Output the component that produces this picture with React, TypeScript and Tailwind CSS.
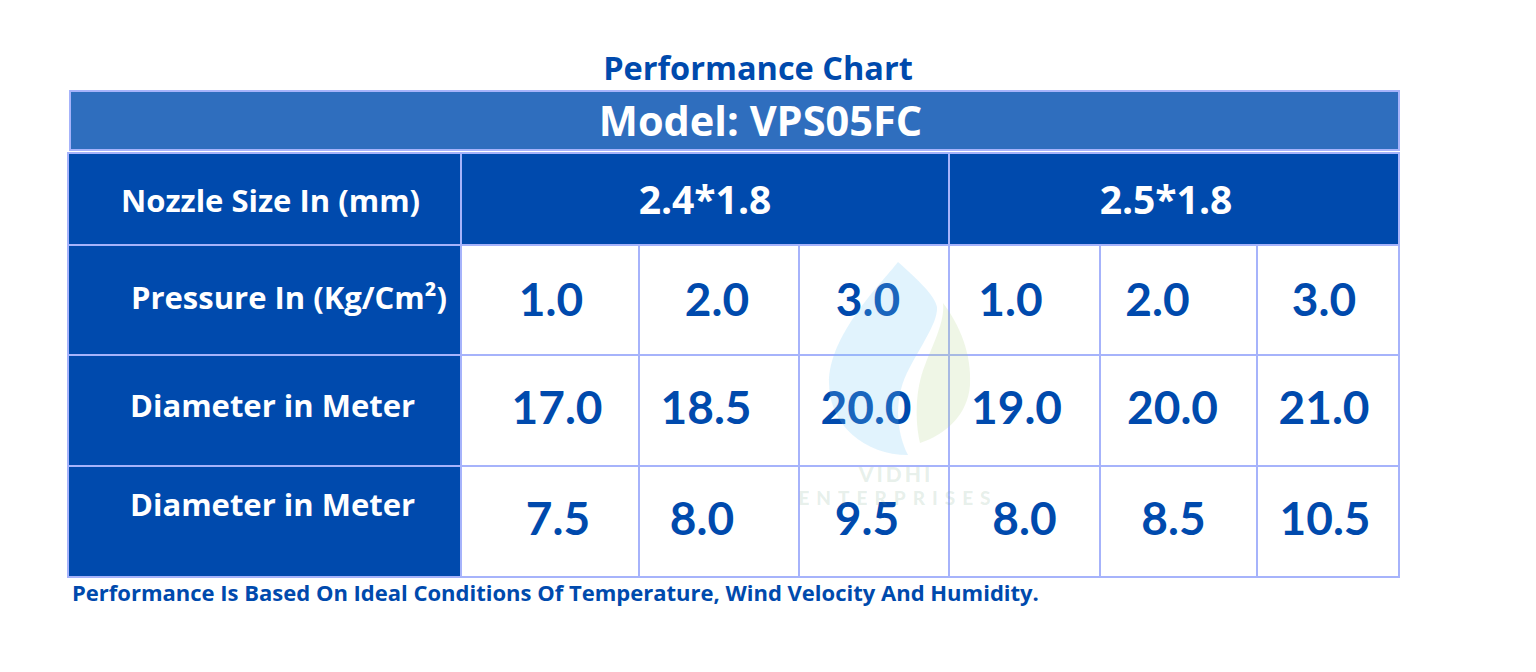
import React from "react";

const LABEL = "font-['Open_Sans',sans-serif] font-bold text-white";
const NUM = "font-['Lato',sans-serif] font-bold text-[#004aad]";

const rows = [
  {
    label: "Pressure In (Kg/Cm²)",
    labelCls: "pl-[62px] pb-[6px]",
    cells: [
      ["1.0", "pl-[2px]"],
      ["2.0", "pr-[4px]"],
      ["3.0", "pr-[12px]"],
      ["1.0", "pr-[28px]"],
      ["2.0", "pr-[42px]"],
      ["3.0", "pr-[8px]"],
    ],
    numCls: "pb-[2px]",
  },
  {
    label: "Diameter in Meter",
    labelCls: "pl-[61px] pb-[10px]",
    cells: [
      ["17.0", "pl-[14px]"],
      ["18.5", "pr-[26px]"],
      ["20.0", "pr-[16px]"],
      ["19.0", "pr-[16px]"],
      ["20.0", "pr-[12px]"],
      ["21.0", "pr-[8px]"],
    ],
    numCls: "pb-[8px]",
  },
  {
    label: "Diameter in Meter",
    labelCls: "pl-[61px] pb-[34px]",
    cells: [
      ["7.5", "pl-[16px]"],
      ["8.0", "pr-[34px]"],
      ["9.5", "pr-[14px]"],
      ["8.0", ""],
      ["8.5", "pr-[10px]"],
      ["10.5", "pr-[6px]"],
    ],
    numCls: "pb-[8px]",
  },
];

// faint logo watermark that sits over the middle of the table
function Watermark() {
  return (
    <div className="pointer-events-none absolute left-[785px] top-[255px] flex w-[230px] flex-col items-start">
      <svg width="210" height="200" viewBox="-35 0 210 200" className="block">
        <path
          d="M78 7 C60 30 9 80 9 128 C9 170 45 200 88 200 C76 176 73 142 90 112 C104 86 118 66 117 52 C115 40 95 22 78 7 Z"
          fill="rgba(120,200,245,0.22)"
        />
        <path
          d="M123 48 C140 70 152 100 150 130 C148 160 125 180 100 188 C95 165 95 135 105 110 C115 85 125 65 123 48 Z"
          fill="rgba(175,210,130,0.2)"
        />
      </svg>
      <div className="mt-[8px] flex w-[226px] flex-col items-center font-['Lato',sans-serif] font-black leading-none text-[rgba(110,160,130,0.17)]">
        <span className="pr-[4px] text-[21px] tracking-[3px]">VIDHI</span>
        <span className="mt-[4px] text-[19px] tracking-[7px]">ENTERPRISES</span>
      </div>
    </div>
  );
}

export default function App() {
  return (
    <div className="relative h-[672px] w-full bg-white">
      <div className="ml-[67px] w-[1333px] pt-[48px]">
        <div className="flex h-[40px] items-center justify-center pl-[49px] font-['Open_Sans',sans-serif] text-[32.5px] font-bold text-[#004aad]">
          Performance Chart
        </div>
        <div className="ml-[2px] mt-[2px] flex h-[61px] w-[1331px] items-center justify-center border-2 border-[#a6b3fb] bg-[#2f6ebe] pl-[52px]">
          <span className={`${LABEL} text-[41.5px]`}>Model: VPS05FC</span>
        </div>
        <div className="mt-[1px] grid grid-cols-[391px_176px_158px_148px_149px_155px_140px] grid-rows-[90px_108px_109px_109px] gap-[2px] bg-[#a6b3fb] p-[2px]">
          <div className="flex items-center bg-[#004aad] pl-[52px] pt-[2px]">
            <span className={`${LABEL} text-[31px]`}>Nozzle Size In (mm)</span>
          </div>
          <div className="col-span-3 flex items-center justify-center bg-[#004aad]">
            <span className={`${LABEL} text-[39px]`}>2.4*1.8</span>
          </div>
          <div className="col-span-3 flex items-center justify-center bg-[#004aad] pr-[16px]">
            <span className={`${LABEL} text-[39px]`}>2.5*1.8</span>
          </div>
          {rows.map((r, i) => (
            <React.Fragment key={i}>
              <div className={`flex items-center bg-[#004aad] ${r.labelCls}`}>
                <span className={`${LABEL} text-[31px]`}>{r.label}</span>
              </div>
              {r.cells.map(([v, cls], j) => (
                <div key={j} className={`flex items-center justify-center bg-white ${cls} ${r.numCls}`}>
                  <span className={`${NUM} text-[46px] leading-none`}>{v}</span>
                </div>
              ))}
            </React.Fragment>
          ))}
        </div>
        <div className="pl-[5px] font-['Open_Sans',sans-serif] text-[22px] font-bold leading-[28px] text-[#004aad]">
          Performance Is Based On Ideal Conditions Of Temperature, Wind Velocity And Humidity.
        </div>
      </div>
      <Watermark />
    </div>
  );
}
